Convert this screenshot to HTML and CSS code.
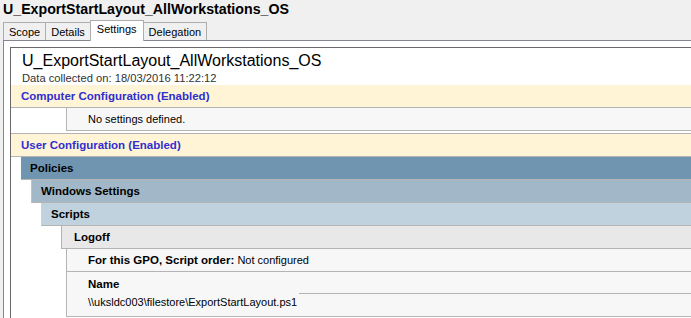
FILE: index.html
```html
<!DOCTYPE html>
<html>
<head>
<meta charset="utf-8">
<link rel="stylesheet" href="styles.css">
</head>
<body>
<div class="window">
  <div class="gpo-title">U_ExportStartLayout_AllWorkstations_OS</div>
  <div class="tabs">
    <div class="tab">Scope</div>
    <div class="tab">Details</div>
    <div class="tab active">Settings</div>
    <div class="tab">Delegation</div>
  </div>
  <div class="panel">
    <div class="report">
      <div class="report-title">U_ExportStartLayout_AllWorkstations_OS</div>
      <div class="collected">Data collected on: 18/03/2016 11:22:12</div>
      <div class="band">Computer Configuration (Enabled)</div>
      <div class="row no-settings">No settings defined.</div>
      <div class="band band-user">User Configuration (Enabled)</div>
      <div class="lvl lvl1">Policies</div>
      <div class="lvl lvl2">Windows Settings</div>
      <div class="lvl lvl3">Scripts</div>
      <div class="lvl lvl4">Logoff</div>
      <div class="row setting"><b>For this GPO, Script order:</b> Not configured</div>
      <div class="row name-table">
        <div class="cell head">Name</div>
        <div class="cell head filler"></div>
        <div class="cell">\\uksldc003\filestore\ExportStartLayout.ps1</div>
        <div class="cell"></div>
      </div>
    </div>
  </div>
</div>
</body>
</html>
```
FILE: styles.css
```css
html, body {
  margin: 0;
  padding: 0;
}
body {
  background: #f0f0f0;
  font-family: "Liberation Sans", Arial, sans-serif;
  font-size: 11px;
  color: #000;
  overflow: hidden;
  width: 691px;
  height: 318px;
}
.window {
  width: 760px;
}
.gpo-title {
  font-weight: bold;
  font-size: 14.2px;
  line-height: 18px;
  padding: 0 0 0 3px;
  height: 20px;
}
.tabs {
  display: flex;
  align-items: flex-end;
  margin-left: 3px;
  height: 20px;
  position: relative;
  z-index: 1;
}
.tab {
  height: 17px;
  line-height: 18px;
  border: 1px solid #adadad;
  border-bottom: none;
  padding: 0 5px;
  margin-right: -1px;
  background: #f0f0f0;
  font-size: 11px;
}
.tab.active {
  height: 20px;
  line-height: 16px;
  background: #fff;
  margin-bottom: -1px;
  padding: 0 6px;
  position: relative;
  z-index: 2;
}
.panel {
  margin-left: 3px;
  border: 1px solid #828790;
  background: #fff;
  padding: 6px 0 0 6px;
  height: 300px;
}
.report {
  border: 1px solid #696969;
  border-right: none;
  border-bottom: none;
  height: 300px;
}
.report-title {
  font-size: 16px;
  line-height: 18px;
  padding: 4px 0 0 11px;
}
.collected {
  font-size: 11.2px;
  line-height: 13px;
  padding: 2px 0 0 11px;
  color: #333;
}
.band {
  background: #fff4d6;
  color: #2f2fd0;
  font-weight: bold;
  font-size: 11.5px;
  line-height: 22px;
  padding-left: 10px;
  border-bottom: 1px solid #b4b4b4;
}
.band-user {
  margin-top: 2px;
  border-top: 1px solid #b4b4b4;
}
.row {
  background: #f7f7f7;
  margin-left: 55px;
  border-left: 1px solid #b4b4b4;
  border-bottom: 1px solid #b4b4b4;
  padding-left: 21px;
  line-height: 22px;
}
.row b {
  font-size: 11.5px;
}
.lvl {
  font-weight: bold;
  font-size: 11.5px;
  line-height: 22px;
  border-bottom: 1px solid #b4b4b4;
  padding-left: 9px;
}
.lvl1 {
  background: #6f95b0;
  margin-left: 10px;
}
.lvl2 {
  background: #a2b8c8;
  margin-left: 20px;
  border-left: 1px solid #b9c6d0;
}
.lvl3 {
  background: #bfd2dd;
  margin-left: 30px;
  border-left: 1px solid #c8d4dc;
}
.lvl4 {
  background: #e8e8e8;
  margin-left: 50px;
  border-left: 1px solid #b4b4b4;
  padding-left: 12px;
}
.name-table {
  display: grid;
  grid-template-columns: 232px 1fr;
  padding: 3px 0 5px 0;
  line-height: 18px;
}
.cell {
  padding-left: 21px;
}
.cell.head {
  font-weight: bold;
  font-size: 11.5px;
}
.cell.filler {
  border-bottom: 1px solid #b4b4b4;
  margin-bottom: -1px;
}
```
